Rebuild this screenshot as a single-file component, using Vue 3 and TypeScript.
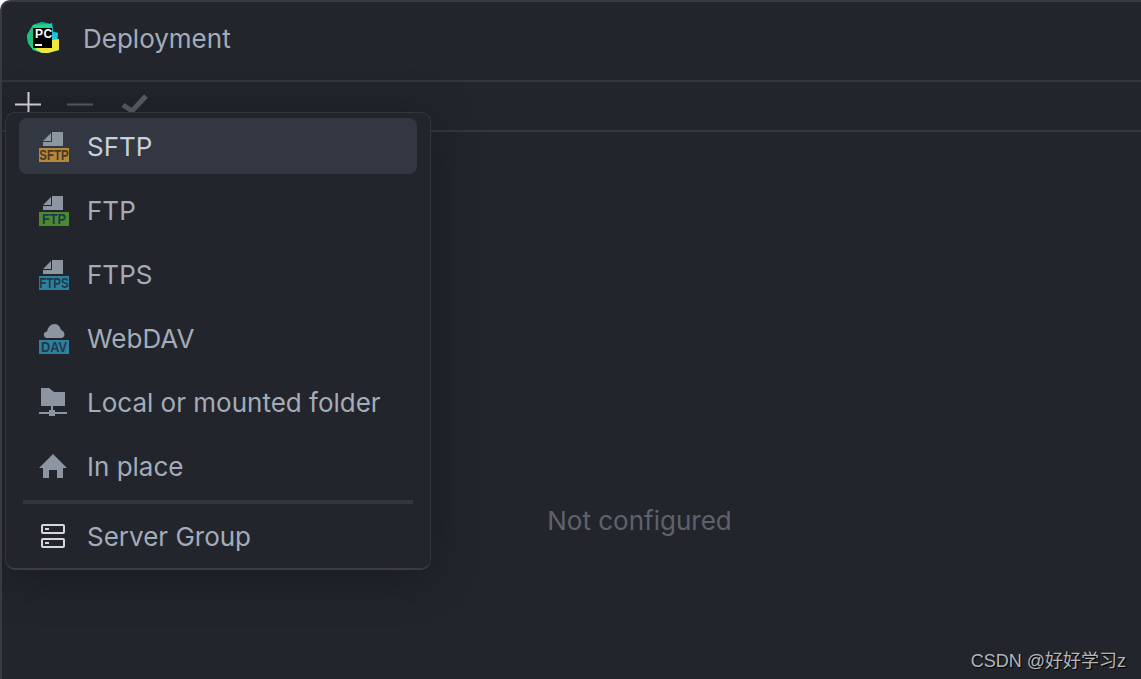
<script setup lang="ts">
const fileRows = [
  { label: 'FTP', tag: 'FTP', color: '#4b8a32', len: 24, narrow: false },
  { label: 'FTPS', tag: 'FTPS', color: '#2f7f9f', len: 28, narrow: true }
]
</script>

<template>
  <div class="window">
    <header class="title-bar">
      <svg class="logo" width="32" height="32" viewBox="0 0 32 32">
        <polygon points="0,13 6,3 15,0 23,2 25,1 26,10 31,11 30,19 32,28 21,31 15,31 6,28 1,21" fill="#21d789" />
        <polygon points="23,2 25,1 26,10 31,11 30,19 25,16" fill="#19c1e6" />
        <polygon points="8,27 25,18 32,17 32,28 21,31 15,31" fill="#f0e63c" />
        <polygon points="0,13 6,3 6,24 1,21" fill="#1fbf7a" />
        <polygon points="6,3 15,0 23,2" fill="#12a88a" />
        <rect x="6" y="6" width="19" height="20" fill="#000" />
        <text x="8" y="16" class="logo-text">PC</text>
        <rect x="8" y="22" width="7" height="2" fill="#fff" />
      </svg>
      <span class="title">Deployment</span>
    </header>

    <div class="toolbar">
      <svg width="26" height="26" viewBox="0 0 26 26"><path d="M0 13.5H26M13.5 1V26" stroke="#d5d7da" stroke-width="2" /></svg>
      <svg width="26" height="26" viewBox="0 0 26 26"><path d="M0 13.5H26" stroke="#5a5d63" stroke-width="2" /></svg>
      <svg width="30" height="26" viewBox="0 0 30 26"><path d="M4 14L13 20L27 5" fill="none" stroke="#5a5d63" stroke-width="5" /></svg>
    </div>

    <main class="content">
      <span class="empty">Not configured</span>
    </main>

    <div class="menu">
      <div class="row selected">
        <span class="icon">
          <svg width="30" height="30" viewBox="0 0 30 30">
            <path d="M13 0H24V14H4V10H13ZM12 1V9H4Z" fill="#8d96a0" />
            <rect x="0" y="16" width="30" height="14" fill="#b5873c" />
            <text x="15" y="23.33" transform="scale(1 1.2)" text-anchor="middle" class="tag tag-narrow tag-sftp">SFTP</text>
          </svg>
        </span>
        <span class="label">SFTP</span>
      </div>

      <div v-for="r in fileRows" :key="r.label" class="row">
        <span class="icon">
          <svg width="30" height="30" viewBox="0 0 30 30">
            <path d="M13 0H24V14H4V10H13ZM12 1V9H4Z" fill="#8d96a0" />
            <rect x="0" y="16" width="30" height="14" :fill="r.color" />
            <text v-if="r.narrow" x="15" y="23.33" transform="scale(1 1.2)" text-anchor="middle" class="tag tag-narrow">{{ r.tag }}</text>
            <text v-else x="15" y="28" text-anchor="middle" class="tag" :textLength="r.len" lengthAdjust="spacingAndGlyphs">{{ r.tag }}</text>
          </svg>
        </span>
        <span class="label">{{ r.label }}</span>
      </div>

      <div class="row">
        <span class="icon">
          <svg width="30" height="30" viewBox="0 0 30 30">
            <path d="M8 14C4 14 3.500 8 8 7.500C9 3 12 0 15.500 0C19 0 21.500 3 22 6C24.500 6.500 25.500 9 25.500 10.500C25.500 12.500 24 14 22 14Z" fill="#8d96a0" />
            <rect x="0" y="16" width="30" height="14" fill="#2f7f9f" />
            <text x="15" y="28" text-anchor="middle" class="tag" textLength="26" lengthAdjust="spacingAndGlyphs">DAV</text>
          </svg>
        </span>
        <span class="label">WebDAV</span>
      </div>

      <div class="row">
        <span class="icon">
          <svg width="30" height="30" viewBox="0 0 30 30">
            <path d="M2 0H10L15 4H26V18H2Z" fill="#8d96a0" />
            <path d="M0 25H28" stroke="#8d96a0" stroke-width="2" />
            <path d="M13 18V24" stroke="#8d96a0" stroke-width="2" />
            <rect x="10" y="22" width="6" height="6" fill="#8d96a0" />
          </svg>
        </span>
        <span class="label">Local or mounted folder</span>
      </div>

      <div class="row">
        <span class="icon">
          <svg width="30" height="30" viewBox="0 0 30 30">
            <path d="M14 2L28 16H24V26H18V18H10V26H4V16H0Z" fill="#8d96a0" />
          </svg>
        </span>
        <span class="label">In place</span>
      </div>

      <div class="separator"></div>

      <div class="row">
        <span class="icon">
          <svg width="30" height="30" viewBox="0 0 30 30">
            <rect x="3" y="3" width="22" height="8" rx="1" fill="none" stroke="#d5d7da" stroke-width="2" />
            <rect x="3" y="17" width="22" height="8" rx="1" fill="none" stroke="#d5d7da" stroke-width="2" />
            <path d="M6 7H10M6 21H10" stroke="#d5d7da" stroke-width="2" />
          </svg>
        </span>
        <span class="label">Server Group</span>
      </div>
    </div>

    <span class="mark">CSDN @好好学习z</span>
  </div>
</template>

<style scoped>
.window {
  position: relative;
  box-sizing: border-box;
  width: 1141px;
  height: 679px;
  overflow: hidden;
  display: flex;
  flex-direction: column;
  background: #22252c;
  border-top: 2px solid #393b40;
  border-left: 2px solid #393b40;
  border-top-left-radius: 10px;
  font-family: Inter, "Noto Sans", sans-serif;
  color: #a3acb8;
}
.title-bar {
  height: 80px;
  flex: none;
  box-sizing: border-box;
  display: flex;
  align-items: center;
  gap: 24px;
  padding: 0 0 6px 25px;
  border-bottom: 2px solid #33363d;
}
.logo { flex: none; }
.logo-text {
  font-family: "Liberation Sans", sans-serif;
  font-weight: 700;
  font-size: 12px;
  letter-spacing: 0.5px;
  fill: #fff;
}
.title { font-size: 26px; }
.toolbar {
  height: 50px;
  flex: none;
  box-sizing: border-box;
  display: flex;
  align-items: center;
  gap: 26px;
  padding: 0 0 4px 13px;
  border-bottom: 2px solid #33363d;
}
.content {
  flex: 1;
  display: flex;
  justify-content: center;
  padding-top: 373px;
}
.empty {
  font-size: 26px;
  line-height: 32px;
  color: #5d626b;
  margin-left: 136px;
}
.menu {
  position: absolute;
  left: 3px;
  top: 110px;
  box-sizing: border-box;
  width: 426px;
  height: 458px;
  padding: 5px 13px 0;
  background: #22252c;
  border: 1px solid #33363d;
  border-bottom: 2px solid #3a3d44;
  border-radius: 10px;
  box-shadow: 0 6px 50px rgba(0, 0, 0, 0.28);
}
.row {
  height: 64px;
  display: flex;
  align-items: center;
  gap: 18px;
  padding-left: 20px;
  border-radius: 8px;
}
.row.selected {
  height: 56px;
  margin-bottom: 4px;
  background: #323742;
  color: #c7d0db;
}
.icon {
  width: 30px;
  height: 30px;
  flex: none;
  display: flex;
  margin-top: 2px;
}
.label { font-size: 26px; white-space: nowrap; }
.tag {
  font-family: "Liberation Sans", sans-serif;
  font-weight: 700;
  font-size: 14px;
  fill: #1f3a48;
}
.tag-narrow { font-size: 11.5px; }
.tag-sftp { fill: #4a3a20; }
.separator {
  height: 4px;
  margin: 2px 4px 0;
  background: #33363d;
}
.mark {
  position: absolute;
  right: 15px;
  bottom: 7px;
  font-family: "Liberation Sans", "Noto Sans CJK SC", sans-serif;
  font-size: 18px;
  color: #b4b6b9;
  text-shadow: 1px 1px 1px #000;
}
</style>
